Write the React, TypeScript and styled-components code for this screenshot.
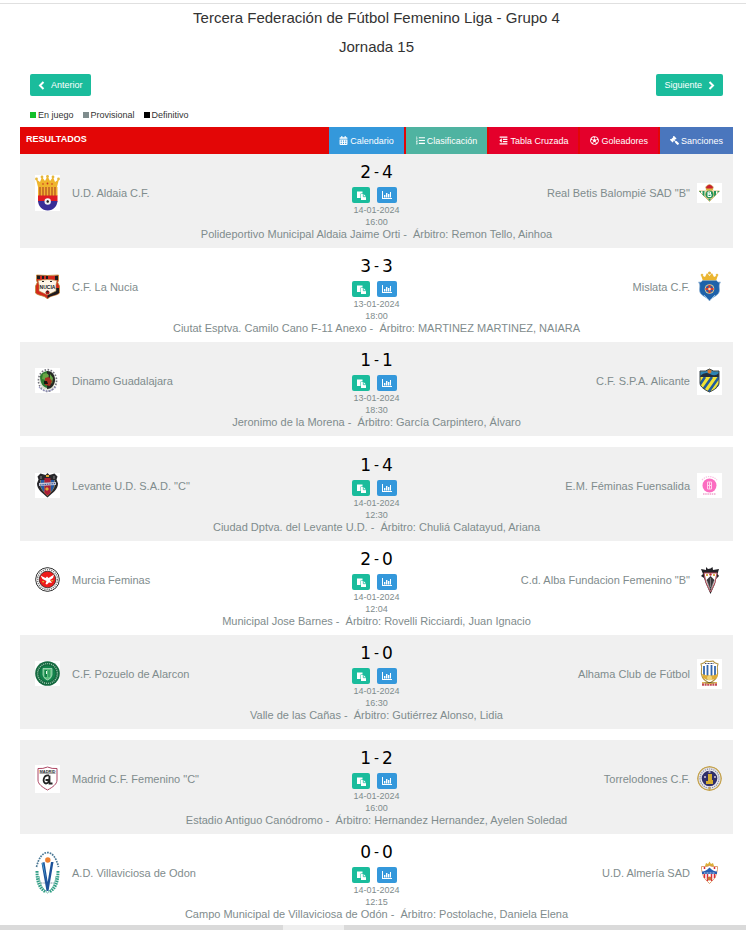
import React from "react";
import styled, { createGlobalStyle } from "styled-components";
import {
  FaCalendarAlt,
  FaGavel,
  FaListOl,
  FaOutdent,
  FaRegFutbol,
} from "react-icons/fa";

const GlobalStyle = createGlobalStyle`
  *, *::before, *::after { box-sizing: border-box; }
  body {
    margin: 0;
    background: #fff;
    color: #333;
    font-family: "Liberation Sans", Arial, sans-serif;
    font-size: 9px;
  }
`;

const Page = styled.div`
  margin-top: 3px;
  border-top: 1px solid #e0e0e0;
`;

const Content = styled.main`
  padding: 0 13px 0 20px;
`;

const Title = styled.h1`
  margin: 0;
  font-size: 15px;
  font-weight: 400;
  line-height: 28px;
  text-align: center;
`;

const Subtitle = styled(Title).attrs({ as: "h2" })`
  line-height: 30px;
`;

const Pager = styled.nav`
  display: flex;
  justify-content: space-between;
  padding: 12px 10px 0;
`;

const PagerButton = styled.button`
  display: flex;
  align-items: center;
  gap: 6px;
  height: 22px;
  padding: 0 8px;
  border: 0;
  border-radius: 2px;
  background: #1abc9c;
  color: #fff;
  font: inherit;
  font-size: 9px;
  cursor: pointer;
`;

const Legend = styled.ul`
  display: flex;
  gap: 9px;
  margin: 0;
  padding: 13px 10px 6px;
  list-style: none;
  line-height: 12px;
`;

const LegendItem = styled.li<{ $color: string }>`
  display: flex;
  align-items: center;
  gap: 2px;

  &::before {
    content: "";
    width: 6px;
    height: 6px;
    background: ${(p) => p.$color};
  }
`;

const Bar = styled.header`
  display: flex;
  background: #e30606;
  color: #fff;
`;

const BarTitle = styled.h3`
  flex: 1;
  margin: 0;
  padding-left: 6px;
  font-size: 9px;
  line-height: 24px;
`;

const Tabs = styled.nav`
  display: flex;
  gap: 2px;
`;

const Tab = styled.a<{ $color: string }>`
  display: flex;
  align-items: center;
  gap: 2px;
  height: 27px;
  padding: 0 10px;
  background: ${(p) => p.$color};
  color: #fff;
  line-height: 12px;
  text-decoration: none;
  white-space: nowrap;
`;

const Mirrored = styled.span`
  display: flex;
  transform: scaleX(-1);
`;

const Group = styled.ul`
  margin: 0 0 11px;
  padding: 0;
  list-style: none;

  &:last-child {
    margin-bottom: 0;
  }

  &:last-child > li:last-child {
    padding-bottom: 4px;
  }
`;

const MatchRow = styled.li`
  padding: 8px 0 7px;
  color: #7f8c8d;

  &:nth-child(odd) {
    background: #f0f0f0;
  }
`;

const MatchGrid = styled.div`
  display: grid;
  grid-template-columns: 1fr auto 1fr;
  align-items: center;
`;

const Team = styled.div<{ $away?: boolean }>`
  display: flex;
  flex-direction: ${(p) => (p.$away ? "row-reverse" : "row")};
  align-items: center;
  gap: ${(p) => (p.$away ? "7px" : "12px")};
  margin-bottom: 5px;
  padding: ${(p) => (p.$away ? "0 11px 0 0" : "0 0 0 15px")};
  font-size: 11px;
  line-height: 14px;
`;

const CrestBox = styled.svg<{ $plain?: boolean }>`
  display: block;
  width: 25px;
  background: #fff;
  border-radius: ${(p) => (p.$plain ? "50%" : "0")};
`;

const Centre = styled.div`
  display: flex;
  flex-direction: column;
  align-items: center;
  line-height: 12px;
`;

const Score = styled.div`
  display: flex;
  gap: 3px;
  margin-bottom: 5px;
  color: #000;
  font-family: "DejaVu Sans", sans-serif;
  font-size: 17px;
  line-height: 20px;
`;

const Dash = styled.span`
  font-family: "Liberation Sans", Arial, sans-serif;
  font-size: 15px;
`;

const Actions = styled.div`
  display: flex;
  gap: 7px;
  margin-bottom: 1px;
  padding-right: 4px;
`;

const ActionButton = styled.button<{ $wide?: boolean }>`
  display: flex;
  align-items: center;
  justify-content: center;
  width: ${(p) => (p.$wide ? 20 : 18)}px;
  height: 16px;
  padding: 0;
  border: 0;
  border-radius: 2px;
  background: ${(p) => (p.$wide ? "#3498db" : "#1abc9c")};
  cursor: pointer;
`;

const Venue = styled.p`
  margin: 0;
  font-size: 11px;
  line-height: 13px;
  text-align: center;
  white-space: pre-wrap;
`;

const Strip = styled.footer`
  display: grid;
  grid-template-columns: 38% 61px 1fr;
  height: 5px;
  background: #dadada;

  &::before {
    content: "";
    grid-column: 2;
    background: #efefef;
  }
`;

const PrevIcon = () => (
  <svg width="7" height="9" viewBox="0 0 7 9" aria-hidden="true">
    <path fill="none" stroke="#fff" strokeWidth="2" d="M5.500 1 2 4.500 5.500 8" />
  </svg>
);

const NextIcon = () => (
  <svg width="7" height="9" viewBox="0 0 7 9" aria-hidden="true">
    <path fill="none" stroke="#fff" strokeWidth="2" d="M1.500 1 5 4.500 1.500 8" />
  </svg>
);

const PasteIcon = () => (
  <svg width="9" height="9" viewBox="0 0 9 9" aria-hidden="true">
    <path fill="#fff" d="M0 .5h5.500v2H3.500V7H0z" />
    <path fill="#fff" d="M4 3h2.500L9 5.500V9H4z" />
    <path fill="none" stroke="#1abc9c" strokeWidth=".8" d="M6.300 3v2.700H9" />
  </svg>
);

const ChartIcon = () => (
  <svg width="10" height="8" viewBox="0 0 10 8" aria-hidden="true">
    <path fill="#fff" d="M0 0h1v7h9v1H0zM2 4h1v2.500H2zM4 2h1v4.500H4zM6 3h1v3.500H6zM8 1h1v5.500H8z" />
    <path fill="#fff" opacity=".4" d="M3 4h1v2.500H3zM5 2h1v4.500H5zM7 3h1v3.500H7z" />
  </svg>
);

type CrestProps = { name: string; height: number; plain?: boolean; children: React.ReactNode };

const Crest = ({ name, height, plain, children }: CrestProps) => (
  <CrestBox viewBox={`0 0 25 ${height}`} height={height} $plain={plain} role="img" aria-label={name}>
    {children}
  </CrestBox>
);

const Aldaia = () => (
  <Crest name="U.D. Aldaia" height={36}>
    <path fill="#efb52d" d="M3 12 1 4l4 3 2-5 3 4 2.500-5 2.500 5 3-4 2 5 4-3-2 8z" />
    <g fill="#e6b83c">
      <circle cx="1.500" cy="4" r="1.400" /><circle cx="7" cy="2" r="1.400" /><circle cx="12.500" cy="1.500" r="1.400" />
      <circle cx="18" cy="2" r="1.400" /><circle cx="23.500" cy="4" r="1.400" />
    </g>
    <g fill="#c8321e">
      <circle cx="8" cy="9" r=".8" /><circle cx="12.500" cy="8.500" r=".9" /><circle cx="17" cy="9" r=".8" />
    </g>
    <clipPath id="aldaia"><path d="M3 12h19.500v13c0 6-4 10.500-9.800 10.500S3 31 3 25z" /></clipPath>
    <g clipPath="url(#aldaia)">
      <path fill="#f3b233" d="M0 11h25v10H0z" />
      <path stroke="#b5521f" strokeWidth="1.300" d="M5 12v9M8 12v9M11 12v9M14 12v9M17 12v9M20 12v9" />
      <path fill="#e01b24" d="M0 20.500h25V27H0z" />
      <path fill="#3a2f97" d="M0 26h25v10H0z" />
    </g>
    <circle cx="12.700" cy="26.500" r="3.200" fill="#f4f4f4" />
    <path fill="#222" d="m12.700 25 1.400 1.100-.6 1.600h-1.600l-.6-1.600z" />
  </Crest>
);

const Nucia = () => (
  <Crest name="C.F. La Nucia" height={26}>
    <path fill="#d5291c" stroke="#b98a32" strokeWidth=".8" d="M1.500 1Q12.500 2 23.500 1v5.500l-.8 2L24.500 12v7c-3 3-9 2-12 6-3-4-9-3-12-6v-7l1.800-3.500-.8-2z" />
    <path fill="#1c1a1e" d="M12.500 14h11.500v5c-3 2.500-8.500 2-11.500 5.500zM2 1.500l11 .4V5H2zM20 2l3-.3V6h-3z" />
    <path fill="#d5291c" d="M5 2h2v3H5zM9 2h2v3H9z" />
    <path fill="#fff6e9" stroke="#a98237" strokeWidth=".6" d="M3 6.500Q12.500 4.500 22 6.500L21 11v6l-8.500 4L4 17v-6z" />
    <path fill="#222" d="M7 7h2v1H7zM15 7h2v1h-2z" />
    <text x="12.500" y="14.800" textAnchor="middle" fontFamily="Liberation Sans" fontWeight="700" fontSize="5" fill="#191919">NUCIA</text>
    <circle cx="12.500" cy="18.500" r="2" fill="#b3201c" /><circle cx="12.500" cy="17.600" r="1" fill="#222" />
  </Crest>
);

const Guadalajara = () => (
  <Crest name="Dinamo Guadalajara" height={25}>
    <ellipse cx="12.500" cy="12.500" rx="9" ry="10.800" fill="none" stroke="#77777f" strokeWidth="1.700" strokeDasharray="1.600 1.500" />
    <ellipse cx="12.500" cy="12.500" rx="8" ry="9.500" fill="#d9dfcf" />
    <path fill="#2e7a31" d="M5 8c2-4 6-5 8-5v17c-5 0-8-5-8-12z" />
    <path fill="#252a25" d="M12 3c6 0 8 5 8 9s-3 9-8 9z" />
    <path fill="#68a544" d="M8 6q5-2 6 2l-3 4-4-1zM15 6l3 4-1 6-2-3z" />
    <path fill="#a53022" d="m10 10 4-1 3 4-2 5-5-1z" />
    <path fill="#15150f" d="M9 13h3l1 3h-4z" />
    <path fill="none" stroke="#9a9ac6" strokeWidth="1.300" strokeDasharray="1.500 1" d="M4 19q8 8 17 0" />
  </Crest>
);

const Levante = () => (
  <Crest name="Levante U.D." height={25}>
    <path fill="#28272b" d="m12.500 0 2 2 5-1.500 3 3-1 3 1.500 4c0 6-5 9-10.500 14C7 19.500 2 16.500 2 10.500l1.500-4-1-3 3-3 5 1.500z" />
    <path fill="#c9a53c" d="M5 7h15v4c0 5-4 8-7.500 12C9 19 5 16 5 11z" />
    <path fill="#2259a7" d="M5.500 7h4v12.500C7 17 5.500 14 5.500 11zM15.500 7h4v4c0 3-1.500 6-4 8.500z" />
    <path fill="#a91f38" d="M9.500 5h6v15l-3 2.500-3-2.500z" />
    <path fill="#c3c7d9" d="m4 10 17-1v3L4 13z" />
    <path stroke="#38508f" strokeWidth="1" strokeDasharray="1.500 .8" d="m5 12 15-1.500" />
    <path fill="#e0aa35" d="m10 16 2-2 2 2-2 2zM11 2h3v2h-3z" />
    <path stroke="#888" strokeWidth="1" d="M6 3v3M19 3v3" />
  </Crest>
);

const Murcia = () => (
  <Crest name="Murcia Feminas" height={25} plain>
    <circle cx="12.500" cy="12.500" r="11.900" fill="#fff" stroke="#222" />
    <circle cx="12.500" cy="12.500" r="10" fill="none" stroke="#777" strokeWidth="1.500" strokeDasharray="1.200 1" />
    <circle cx="12.500" cy="12.500" r="8.300" fill="#ed1c1c" stroke="#222" strokeWidth=".8" />
    <path fill="#fff" d="m5.500 8.500 5 2.500 1.500-1.500 1.500 1.500 5.500-3.500-1 3.500-3 2 2 3-3-.5-2 2-1.500-.5 1-3-4-2z" />
    <path fill="#e0b32f" d="M7 14h2.500l-1.500 2zM16 13h2.500L17 15z" />
  </Crest>
);

const Pozuelo = () => (
  <Crest name="C.F. Pozuelo de Alarcón" height={25}>
    <circle cx="12.500" cy="12.500" r="12.300" fill="#14683f" />
    <circle cx="12.500" cy="12.500" r="9.900" fill="none" stroke="#9cc8ae" strokeWidth="1.400" strokeDasharray="1 1" />
    <circle cx="12.500" cy="12.500" r="8" fill="#12824a" />
    <path fill="#5cbf7e" stroke="#d8efdf" strokeWidth=".6" d="M8 7.500h9V14q-1 4-4.500 5Q9 18 8 14z" />
    <path fill="#138149" d="M9.500 9H12v7H9.500zM13.500 9h1v7h-1z" />
    <path fill="#e7f6eb" d="M11 10h1v3h-1z" />
  </Crest>
);

const MadridFem = () => (
  <Crest name="Madrid C.F. Femenino" height={28}>
    <path fill="#fff" stroke="#ad4764" strokeWidth="1" d="M3 3.500Q8 4 12.500 2 17 4 22 3.500V15c0 4-4 7-9.500 10C7 22 3 19 3 15z" />
    <path fill="none" stroke="#555" strokeWidth=".5" d="M4.500 8.500h16" />
    <text x="12.500" y="7.800" textAnchor="middle" fontFamily="Liberation Sans" fontWeight="700" fontSize="4" fill="#28242a">MADRID</text>
    <path fill="none" stroke="#222" strokeWidth="1.800" d="M14 10.500c-6-1-7 7.500-3 8 2.500 0 3.500-3 3.500-8v8h3M10.500 15h4" />
  </Crest>
);

const Villaviciosa = () => (
  <Crest name="A.D. Villaviciosa de Odón" height={44}>
    <path fill="none" stroke="#4b7895" strokeWidth="1.700" strokeDasharray="1.700 1" d="M1.500 16Q5 2 12.500 1.500 20 2 23.500 16" />
    <path fill="none" stroke="#2f9d84" strokeWidth="3" strokeDasharray="1.600 .8" d="M2 20c0 12 3 18 9 21M23 20c0 12-3 18-9 21" />
    <path fill="none" stroke="#48a890" strokeWidth=".8" d="M4 25c1 9 4 13 8.500 17C17 38 20 34 21 25" />
    <path fill="#1d5299" d="m6.500 12 3-1 3.200 20L16 11h2.500l-5 29h-2z" />
    <path fill="#4fa8d8" d="m7 12 1-.3 4 20.300z" />
    <circle cx="12.800" cy="9" r="2.700" fill="#ef7f2e" />
    <path stroke="#78909f" strokeWidth="1" strokeDasharray="1 .6" d="M6 32h4.500M14.500 32H19" />
  </Crest>
);

const Betis = () => (
  <Crest name="Real Betis Balompié" height={20}>
    <path fill="#fff" stroke="#c8a448" strokeWidth=".7" d="m2 8 20.500 0-10 10.500z" />
    <path fill="#22975b" d="M2 8h2v2zM5.500 8h2v5.700l-2-2zM17 8h2v3.700l-2 2zM20.500 8h2l-2 2z" />
    <circle cx="12.500" cy="11.500" r="4.300" fill="#23945a" stroke="#d4b353" strokeWidth=".7" />
    <path fill="none" stroke="#fff" strokeWidth="1" d="M11 9h2.500v2H11h3v2.500h-3z" />
    <path fill="#23945a" d="M11 16h3l-1.500 2z" />
    <path fill="#c92030" stroke="#caa53f" strokeWidth=".6" d="m9.500 7-.8-3 1.800-1.800 2-.8 2 .8L16.300 4l-.8 3z" />
    <path fill="#dcb73e" d="M9 5.500h7V7H9z" />
  </Crest>
);

const Mislata = () => (
  <Crest name="Mislata C.F." height={31}>
    <path fill="#ebb52f" d="M6 10 4 4l4 2 2-4 2.500 3L15 2l2 4 4-2-2 6z" />
    <circle cx="12.500" cy="2" r="1.500" fill="#e1b33c" />
    <circle cx="5" cy="4" r="1.300" fill="#e8bd4a" /><circle cx="20" cy="4" r="1.300" fill="#e8bd4a" />
    <path fill="#1e62aa" stroke="#8fb1d4" strokeWidth=".6" d="M1.500 11q3 1 4-1.500h14q1 2.500 4 1.500c-2 3-1 5-1 8 0 6-7 6-10 11-3-5-10-5-10-11 0-3 1-5-1-8z" />
    <circle cx="12.500" cy="18" r="4.800" fill="#e4cf8a" />
    <circle cx="12.500" cy="18" r="3.800" fill="#3b57a2" />
    <path stroke="#d93a2b" strokeWidth="2" d="M8.500 18h8M12.500 14v8" />
    <circle cx="12.500" cy="18" r="1.300" fill="#f3e4b0" />
    <path stroke="#86b8df" strokeWidth="1" d="m7 24 3 3M18 24l-3 3" />
  </Crest>
);

const Alicante = () => (
  <Crest name="C.F. S.P.A. Alicante" height={28}>
    <clipPath id="alicante"><path d="M3 4q6 1 9.500-2Q16 5 22 4v12c0 4-5 7-9.500 9C8 23 3 20 3 16z" /></clipPath>
    <g clipPath="url(#alicante)">
      <path fill="#f2e332" d="M0 0h25v28H0z" />
      <path stroke="#205c9c" strokeWidth="2.500" d="m0 22 8-12M3 27l12-17M10 27l12-17M16 27l10-15" />
      <path fill="#2d83b2" d="M0 0h25v10H0z" />
      <path fill="#222d3a" d="M3 9q5-5 10-2t9-1v4H3z" />
    </g>
    <path fill="none" stroke="#3a454a" strokeWidth="1" d="M3 4q6 1 9.500-2Q16 5 22 4v12c0 4-5 7-9.500 9C8 23 3 20 3 16z" />
    <circle cx="12.500" cy="4.500" r="2" fill="#d9772b" />
  </Crest>
);

const Fuensalida = () => (
  <Crest name="E.M. Féminas Fuensalida" height={25}>
    <circle cx="12.500" cy="12.500" r="7" fill="#fb6dc1" />
    <path fill="none" stroke="#f6c1df" strokeWidth="1.200" strokeDasharray="1.300 1" d="M5 7q7-7 15 0" />
    <path stroke="#efa5ce" strokeWidth="1.500" strokeDasharray="1.500 .7" d="M6 21h13" />
    <path fill="none" stroke="#ffd3ec" strokeWidth="1" d="M10.500 9h4v7h-4zM10.500 12.500h4M12.500 9v7" />
  </Crest>
);

const Alba = () => (
  <Crest name="Fundación Albacete Femenino" height={28}>
    <path fill="#222126" d="m9 1 2 2 2.500-.5 2-1.500.5 3 6-1-1.500 5L22 10l-3 3-1 5-4.500 10L9 18l-2-6-3-2 2-2-2-5 5 1z" />
    <path fill="#fff" stroke="#b74d59" strokeWidth="1" d="M7 7h13q-1 10-6.500 19Q8 17 7 7z" />
    <path fill="#39363a" d="m13.500 10 4 4-4 11-4-11z" />
    <path stroke="#999" strokeWidth=".7" d="m10 15 3 8M13.500 12v9M17 15l-3 8" />
    <path fill="#d5ad49" d="M9 8h2v2H9zM16 8h2v2h-2z" />
    <circle cx="13.500" cy="8.500" r="1.200" fill="#bf2b38" />
  </Crest>
);

const Alhama = () => (
  <Crest name="Alhama Club de Fútbol" height={30}>
    <path fill="#fff" stroke="#b29545" strokeWidth="1.100" d="M4 5q4-1 5-3 3 1 7 0 1 2 5 3c-2 4 1 8-1 12-1 4-4 5-7.500 7C9 22 6 21 5 17 3 13 6 9 4 5z" />
    <path stroke="#3267ad" strokeWidth="1.800" d="M7 7v12M10.500 6v15M14.500 6v14M18 7v11" />
    <path stroke="#444f70" strokeWidth="1.200" strokeDasharray="1 .5" d="M8 4.500h9" />
    <path fill="#dfad37" d="M5 15q8 3 16 0l-1 4q-7 4-14 0z" />
    <circle cx="12.500" cy="19" r="2.500" fill="#f1d479" />
    <path fill="none" stroke="#c24a55" strokeWidth="2.300" strokeDasharray="2 .6" d="M5 25.500h15" />
    <path stroke="#e3b83d" strokeWidth="1" d="M5 23.500q8 2 15 0" />
  </Crest>
);

const Torrelodones = () => (
  <Crest name="Torrelodones C.F." height={25} plain>
    <circle cx="12.500" cy="12.500" r="11.700" fill="#e8e8ec" stroke="#c3a250" strokeWidth="1.500" />
    <circle cx="12.500" cy="12.500" r="9.500" fill="none" stroke="#8888a0" strokeWidth="1.200" strokeDasharray="1.200 1" />
    <circle cx="12.500" cy="12.500" r="7.800" fill="#302f68" />
    <path fill="#d6ad31" d="M11 8h4v6h1v4H9v-3h2z" />
    <path fill="#aaa2bf" d="M7 10h2v2H7zM17 10h2v2h-2zM11.500 5h2v2h-2z" />
    <path fill="#c6a552" d="M11.500 21h2v3h-2z" />
  </Crest>
);

const Almeria = () => (
  <Crest name="U.D. Almería" height={24}>
    <path fill="#dcae37" d="m8 5 1-3 2 1 1.500-2.500L14 3l2-1 1 3z" />
    <path fill="#fff" stroke="#d58a4b" strokeWidth=".8" d="M4.500 5.500H10l2.500-1 2.500 1h5.500v3l-1 4c-1 5-4 7-7 10-3-3-6-5-7-10l-1-4z" />
    <path stroke="#d92d3b" strokeWidth="1.500" d="M7.500 12v5M10.500 12v8M14.500 12v8M17.500 12v5M7.500 6v2M17.500 6v2" />
    <path fill="#295eb1" d="M5 10.500q4 0 7.500-4 3.500 4 7.500 4V13H5z" />
    <path stroke="#fff" strokeWidth=".7" strokeDasharray="1 .5" d="M7 12h11" />
    <circle cx="12.500" cy="17.500" r="2" fill="#c67a30" />
  </Crest>
);

type Side = { name: string; crest: React.ComponentType };
type Match = {
  home: Side;
  away: Side;
  score: [number, number];
  date: string;
  time: string;
  venue: string;
  referee: string;
};

const match = (
  homeName: string,
  homeCrest: React.ComponentType,
  awayName: string,
  awayCrest: React.ComponentType,
  score: [number, number],
  date: string,
  time: string,
  venue: string,
  referee: string,
): Match => ({
  home: { name: homeName, crest: homeCrest },
  away: { name: awayName, crest: awayCrest },
  score,
  date,
  time,
  venue,
  referee,
});

const groups: Match[][] = [
  [
    match("U.D. Aldaia C.F.", Aldaia, 'Real Betis Balompié SAD "B"', Betis, [2, 4], "14-01-2024", "16:00", "Polideportivo Municipal Aldaia Jaime Orti", "Remon Tello, Ainhoa"),
    match("C.F. La Nucia", Nucia, "Mislata C.F.", Mislata, [3, 3], "13-01-2024", "18:00", "Ciutat Esptva. Camilo Cano F-11 Anexo", "MARTINEZ MARTINEZ, NAIARA"),
    match("Dinamo Guadalajara", Guadalajara, "C.F. S.P.A. Alicante", Alicante, [1, 1], "13-01-2024", "18:30", "Jeronimo de la Morena", "García Carpintero, Álvaro"),
  ],
  [
    match('Levante U.D. S.A.D. "C"', Levante, "E.M. Féminas Fuensalida", Fuensalida, [1, 4], "14-01-2024", "12:30", "Ciudad Dptva. del Levante U.D.", "Chuliá Calatayud, Ariana"),
    match("Murcia Feminas", Murcia, 'C.d. Alba Fundacion Femenino "B"', Alba, [2, 0], "14-01-2024", "12:04", "Municipal Jose Barnes", "Rovelli Ricciardi, Juan Ignacio"),
    match("C.F. Pozuelo de Alarcon", Pozuelo, "Alhama Club de Fútbol", Alhama, [1, 0], "14-01-2024", "16:30", "Valle de las Cañas", "Gutiérrez Alonso, Lidia"),
  ],
  [
    match('Madrid C.F. Femenino "C"', MadridFem, "Torrelodones C.F.", Torrelodones, [1, 2], "14-01-2024", "16:00", "Estadio Antiguo Canódromo", "Hernandez Hernandez, Ayelen Soledad"),
    match("A.D. Villaviciosa de Odon", Villaviciosa, "U.D. Almería SAD", Almeria, [0, 0], "14-01-2024", "12:15", "Campo Municipal de Villaviciosa de Odón", "Postolache, Daniela Elena"),
  ],
];

const MatchItem = ({ home, away, score, date, time, venue, referee }: Match) => (
  <MatchRow>
    <MatchGrid>
      <Team>
        <home.crest />
        <span>{home.name}</span>
      </Team>
      <Centre>
        <Score>
          <span>{score[0]}</span>
          <Dash>-</Dash>
          <span>{score[1]}</span>
        </Score>
        <Actions>
          <ActionButton type="button" aria-label="Acta del partido">
            <PasteIcon />
          </ActionButton>
          <ActionButton type="button" $wide aria-label="Estadísticas">
            <ChartIcon />
          </ActionButton>
        </Actions>
        <span>{date}</span>
        <span>{time}</span>
      </Centre>
      <Team $away>
        <away.crest />
        <span>{away.name}</span>
      </Team>
    </MatchGrid>
    <Venue>{`${venue} -  Árbitro: ${referee}`}</Venue>
  </MatchRow>
);

export default function App() {
  return (
    <Page>
      <GlobalStyle />
      <Content>
        <Title>Tercera Federación de Fútbol Femenino Liga - Grupo 4</Title>
        <Subtitle>Jornada 15</Subtitle>
        <Pager>
          <PagerButton type="button">
            <PrevIcon />
            Anterior
          </PagerButton>
          <PagerButton type="button">
            Siguiente
            <NextIcon />
          </PagerButton>
        </Pager>
        <Legend>
          <LegendItem $color="#14bf2b">En juego</LegendItem>
          <LegendItem $color="#7f8c8d">Provisional</LegendItem>
          <LegendItem $color="#000">Definitivo</LegendItem>
        </Legend>
        <Bar>
          <BarTitle>RESULTADOS</BarTitle>
          <Tabs>
            <Tab href="#calendario" $color="#3498db"><FaCalendarAlt />Calendario</Tab>
            <Tab href="#clasificacion" $color="#4fb3a1"><FaListOl />Clasificación</Tab>
            <Tab href="#tabla" $color="#e4002b"><FaOutdent />Tabla Cruzada</Tab>
            <Tab href="#goleadores" $color="#e4002b"><FaRegFutbol />Goleadores</Tab>
            <Tab href="#sanciones" $color="#4a76bd">
              <Mirrored><FaGavel /></Mirrored>Sanciones
            </Tab>
          </Tabs>
        </Bar>
        {groups.map((matches, i) => (
          <Group key={i}>
            {matches.map((m) => (
              <MatchItem key={m.home.name} {...m} />
            ))}
          </Group>
        ))}
      </Content>
      <Strip />
    </Page>
  );
}
